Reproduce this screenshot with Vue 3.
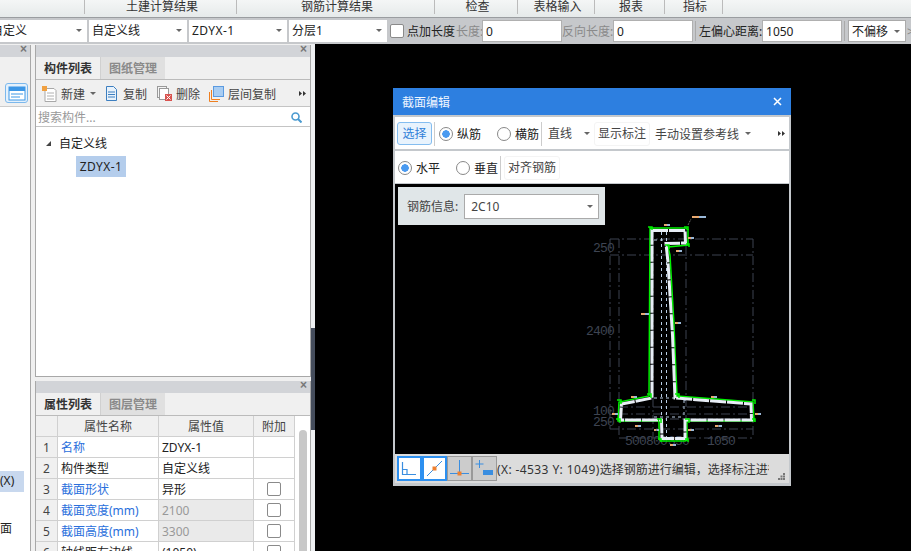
<script setup>
const menus = [
  { label: '', width: 85 },
  { label: '土建计算结果', width: 152 },
  { label: '钢筋计算结果', width: 198 },
  { label: '检查', width: 83 },
  { label: '表格输入', width: 77 },
  { label: '报表', width: 70 },
  { label: '指标', width: 58 },
]

const rows = [
  { no: 1, name: '名称', blue: true, value: 'ZDYX-1', check: false },
  { no: 2, name: '构件类型', blue: false, value: '自定义线', check: false },
  { no: 3, name: '截面形状', blue: true, value: '异形', check: true },
  { no: 4, name: '截面宽度(mm)', blue: true, value: '2100', check: true, off: true },
  { no: 5, name: '截面高度(mm)', blue: true, value: '3300', check: true, off: true },
  { no: 6, name: '轴线距左边线', blue: false, value: '(1050)', check: true },
]

const outline = '650,228 686,228 688,230 688,245 668,247 670,255 672,290 674,325 675,350 677,396 753,402 754,421 687,421 687,440 685,441 661,441 659,439 659,421 618,421 619,402 649,396'
const inner = '652,230.500 685,230.500 685.500,243 666,243.500 668,262 670,295 672.500,335 675,398 751,404 751.500,420 685,420 685,438.500 662,438.500 661.500,420 620.500,420 621.500,404 652,398'

const hDims = [
  [610, 753, 239], [610, 753, 255], [619, 753, 407], [619, 753, 414],
  [619, 753, 419], [610, 753, 429], [619, 753, 438],
]
const vDims = [
  [610, 239, 429], [619, 239, 438], [653, 228, 438], [686, 228, 438], [753, 239, 438],
]
const ticks = [
  [664, 224, 6], [688, 237, 6], [676, 250, 6], [641, 313, 8], [675, 322, 6],
  [631, 396, 6], [711, 396, 6], [612, 413, 6], [755, 413, 6], [635, 425, 6],
  [715, 425, 7], [654, 429, 5], [688, 429, 6], [670, 444, 6], [692, 216, 14],
]
</script>

<template>
  <div class="app">
    <div class="menu">
      <div v-for="m in menus" :key="m.label" class="menu-item" :style="{ width: m.width + 'px' }">{{ m.label }}</div>
    </div>

    <div class="toolbar">
      <div class="combo first">自定义<i class="caret"></i></div>
      <div class="combo">自定义线<i class="caret"></i></div>
      <div class="combo latin">ZDYX-1<i class="caret"></i></div>
      <div class="combo">分层1<i class="caret"></i></div>
      <span class="check tb-check"></span>
      <span class="tb-label">点加长度</span>
      <span class="tb-label muted len">长度:</span>
      <div class="field">0</div>
      <span class="tb-label muted rev">反向长度:</span>
      <div class="field">0</div>
      <span class="tb-sep"></span>
      <span class="tb-label offset">左偏心距离:</span>
      <div class="field">1050</div>
      <span class="tb-sep"></span>
      <div class="combo small">不偏移<i class="caret"></i></div>
      <span class="tb-more">&gt;</span>
    </div>

    <div class="main">
      <div class="side">
        <div class="panel-head"><span class="close">×</span></div>
        <div class="side-tools">
          <span class="side-icon">
            <svg width="18" height="15" viewBox="0 0 18 15">
              <rect x="1" y="1" width="16" height="13" fill="#fff" stroke="#3d97e6" />
              <rect x="1" y="1" width="16" height="4" fill="#3d97e6" />
              <path d="M3 8h12M3 11h9" stroke="#3d97e6" />
            </svg>
          </span>
        </div>
        <div class="side-body">
          <div class="side-sel">(X)</div>
          <div class="side-text">面</div>
        </div>
      </div>

      <div class="mid">
        <section class="panel top-panel">
          <div class="panel-head"><span class="close">×</span></div>
          <div class="tabs">
            <span class="tab active">构件列表</span>
            <span class="tab">图纸管理</span>
          </div>
          <div class="panel-tools">
            <svg class="t-icon new-icon" width="16" height="16" viewBox="0 0 16 16">
              <path d="M3 2.500h9l2 2v11H3z" fill="#fff" stroke="#a8a8a8" />
              <path d="M5 7h7M5 10h7M5 13h7" stroke="#b0b0b0" />
              <rect x="0" y="0" width="5" height="5" fill="#f0a040" />
            </svg>
            <span>新建</span>
            <i class="caret new-caret"></i>
            <svg class="t-icon copy-icon" width="13" height="15" viewBox="0 0 13 15">
              <path d="M1.500 .5h7l3 3v11h-10z" fill="#e8f2fb" stroke="#3d7fc0" />
              <path d="M3 6h7M3 8.500h7M3 11h7" stroke="#3d7fc0" />
            </svg>
            <span>复制</span>
            <svg class="t-icon del-icon" width="15" height="15" viewBox="0 0 15 15">
              <rect x=".5" y=".5" width="9" height="11" fill="#f4f4f4" stroke="#999" />
              <rect x="2.500" y="2.500" width="9" height="11" fill="#fff" stroke="#999" />
              <rect x="8" y="8" width="7" height="7" fill="#d9534f" />
              <path d="M9.500 9.500l4 4m0-4l-4 4" stroke="#fff" />
            </svg>
            <span>删除</span>
            <svg class="t-icon floor-icon" width="15" height="16" viewBox="0 0 15 16">
              <path d="M.5 6v9.500H9M2.500 4v9.500H11" fill="none" stroke="#ee7f20" />
              <rect x="4.500" y=".5" width="10" height="10" fill="#a9cdf2" stroke="#5a9ae0" />
            </svg>
            <span>层间复制</span>
            <svg class="more" width="7" height="5" viewBox="0 0 7 5" fill="#333"><path d="M0 0l3 2.500L0 5zM4 0l3 2.500L4 5z" /></svg>
          </div>
          <div class="search">
            <span>搜索构件...</span>
            <svg width="11" height="11" viewBox="0 0 11 11">
              <circle cx="4.500" cy="4.500" r="3.500" fill="none" stroke="#4a9ad0" stroke-width="1.600" />
              <path d="M7 7l3.500 3.500" stroke="#4a9ad0" stroke-width="2" />
            </svg>
          </div>
          <div class="tree">
            <div class="tree-root"><i class="tree-arrow"></i>自定义线</div>
            <div class="tree-node latin">ZDYX-1</div>
          </div>
        </section>

        <section class="panel bottom-panel">
          <div class="panel-head"><span class="close">×</span></div>
          <div class="tabs">
            <span class="tab active">属性列表</span>
            <span class="tab">图层管理</span>
          </div>
          <div class="grid-wrap">
            <div class="grid">
              <div class="cell no head"></div>
              <div class="cell name head">属性名称</div>
              <div class="cell value head">属性值</div>
              <div class="cell add head">附加</div>
              <template v-for="r in rows" :key="r.no">
                <div class="cell no head">{{ r.no }}</div>
                <div class="cell name left" :class="{ blue: r.blue }">{{ r.name }}</div>
                <div class="cell value left" :class="{ off: r.off }">{{ r.value }}</div>
                <div class="cell add"><span v-if="r.check" class="check"></span></div>
              </template>
            </div>
            <div class="scroll"><span class="thumb"></span></div>
          </div>
        </section>
      </div>

      <div class="splitter"><span class="grip"></span></div>

      <div class="canvas">
        <div class="dialog">
          <div class="dialog-title">
            <span>截面编辑</span>
            <svg width="9" height="9" viewBox="0 0 9 9"><path d="M1 1l7 7m0-7l-7 7" stroke="#fff" stroke-width="1.500" /></svg>
          </div>

          <div class="d-row">
            <span class="btn-select">选择</span>
            <span class="d-sep"></span>
            <span class="radio on r1"></span><span class="r-label">纵筋</span>
            <span class="radio r2"></span><span class="r-label">横筋</span>
            <span class="d-sep s2"></span>
            <span class="d-combo">直线</span><i class="caret c1"></i>
            <span class="d-btn b1">显示标注</span>
            <span class="d-text">手动设置参考线</span><i class="caret c2"></i>
            <svg class="more d-more" width="7" height="5" viewBox="0 0 7 5" fill="#333"><path d="M0 0l3 2.500L0 5zM4 0l3 2.500L4 5z" /></svg>
          </div>

          <div class="d-row second">
            <span class="radio on"></span><span class="r-label">水平</span>
            <span class="radio r3"></span><span class="r-label">垂直</span>
            <span class="d-sep s3"></span>
            <span class="d-btn">对齐钢筋</span>
          </div>

          <div class="draw">
            <div class="rebar-info">
              <span>钢筋信息:</span>
              <div class="rebar-select">2C10<i class="caret"></i></div>
            </div>
            <svg class="section" width="394" height="270" viewBox="395 184 394 270">
              <g stroke="#3c4250" stroke-dasharray="9 3 2 3" fill="none">
                <line v-for="(d, i) in hDims" :key="'h' + i" :x1="d[0]" :x2="d[1]" :y1="d[2]" :y2="d[2]" />
                <line v-for="(d, i) in vDims" :key="'v' + i" :x1="d[0]" :x2="d[0]" :y1="d[1]" :y2="d[2]" />
              </g>
              <g class="dim-text">
                <text x="593" y="252">250</text>
                <text x="586" y="335">2400</text>
                <text x="593" y="415">100</text>
                <text x="593" y="426">250</text>
                <text x="625" y="445">500</text>
                <text x="646" y="445">800</text>
                <text x="668" y="445">350</text>
                <text x="707" y="445">1050</text>
              </g>
              <g stroke="#b8cce4" stroke-dasharray="3 3" fill="none">
                <path d="M661.500 232V438M666.500 232V438M654 398H676M684 400H686M654 240h10M654 417h30M684 400v18" />
              </g>
              <polygon :points="outline" fill="none" stroke="#00f000" stroke-width="1.500" />
              <polygon :points="inner" fill="none" stroke="#e8eef6" stroke-width="3" stroke-dasharray="16 1" />
              <g fill="none" stroke="#00f000" stroke-width="1.500">
                <path d="M648 227h4v3M684 227h4v3M686 244h3v3M665 245h4v4M647 394h4v4M675 394h4v4M617 400h4v4M752 400h3v4M616 419h4v4M657 419h4v4M685 419h4v4M685 439h3v3M658 439h3v3M752 419h3v3" />
              </g>
              <path d="M688 225l3-6" stroke="#666" stroke-dasharray="2 1" />
              <g>
                <g v-for="(t, i) in ticks" :key="'t' + i">
                  <rect :x="t[0]" :y="t[1]" :width="t[2] / 2" height="2" fill="#e8a870" />
                  <rect :x="t[0] + t[2] / 2" :y="t[1]" :width="t[2] / 2" height="2" fill="#9ab8d8" />
                </g>
              </g>
            </svg>
          </div>

          <div class="status">
            <span class="s-btn on">
              <svg width="21" height="21" viewBox="0 0 21 21"><path d="M3.500 4v12.500H17M3.500 11.500H8v5" fill="none" stroke="#3a8ee0" stroke-width="1.200" /></svg>
            </span>
            <span class="s-btn on">
              <svg width="21" height="21" viewBox="0 0 21 21"><path d="M3 18L18 3" stroke="#3a8ee0" /><rect x="8.500" y="8.500" width="4" height="4" fill="#ee8030" /></svg>
            </span>
            <span class="s-btn">
              <svg width="23" height="23" viewBox="0 0 23 23"><path d="M11.500 3v15M2 16.500h19" stroke="#3a8ee0" /><rect x="9.500" y="14.500" width="4" height="4" fill="#ee8030" /></svg>
            </span>
            <span class="s-btn">
              <svg width="23" height="23" viewBox="0 0 23 23"><path d="M6.500 3v8M2.500 7h8" stroke="#3a8ee0" /><rect x="10" y="13" width="10" height="5" fill="#3a8ee0" /></svg>
            </span>
            <span class="status-text"><span class="latin">(X: -4533 Y: 1049)</span>选择钢筋进行编辑，选择标注进行</span>
            <svg class="resize" width="7" height="7" viewBox="0 0 7 7" fill="#777">
              <rect x="5" y="0" width="2" height="2" /><rect x="2.500" y="2.500" width="2" height="2" /><rect x="5" y="2.500" width="2" height="2" />
              <rect x="0" y="5" width="2" height="2" /><rect x="2.500" y="5" width="2" height="2" /><rect x="5" y="5" width="2" height="2" />
            </svg>
          </div>
        </div>
      </div>
    </div>
  </div>
</template>

<style>
html, body { margin: 0; overflow: hidden; }
</style>

<style scoped>
.app {
  width: 911px;
  height: 551px;
  overflow: hidden;
  display: flex;
  flex-direction: column;
  background: #f0f0f0;
  color: #222;
  font-family: "Noto Sans", "Noto Sans CJK SC", sans-serif;
  font-size: 12px;
}
.latin { letter-spacing: .4px; }
.menu {
  height: 17px;
  flex: 0 0 17px;
  display: flex;
  background: linear-gradient(#f4f6f6, #e6eaea);
  border-bottom: 1px solid #9a9da0;
  overflow: hidden;
}
.menu-item {
  box-sizing: border-box;
  height: 14px;
  line-height: 14px;
  text-align: center;
  padding-left: 3px;
  border-right: 1px solid #bbb;
  font-size: 12px;
  color: #333;
}
.toolbar {
  height: 26px;
  flex: 0 0 26px;
  box-sizing: border-box;
  display: flex;
  align-items: center;
  gap: 2px;
  background: #c6c8cb;
  overflow: hidden;
}
.combo {
  box-sizing: border-box;
  position: relative;
  flex: 0 0 98px;
  height: 22px;
  line-height: 21px;
  padding-left: 3px;
  background: #fff;
  white-space: nowrap;
}
.combo.first {
  flex-basis: 87px;
  text-indent: -12px;
  overflow: hidden;
}
.combo.small {
  flex-basis: 58px;
  border: 1px solid #aaa;
}
.caret {
  position: absolute;
  right: 5px;
  top: 9px;
  width: 0;
  height: 0;
  border-left: 3px solid transparent;
  border-right: 3px solid transparent;
  border-top: 3px solid #666;
}
.check {
  display: block;
  flex: none;
  box-sizing: border-box;
  width: 14px;
  height: 14px;
  background: #fff;
  border: 1px solid #8a8a8a;
  border-radius: 2px;
}
.tb-check { margin-left: 1px; }
.tb-label { flex: none; margin-left: 1px; white-space: nowrap; }
.tb-label.muted { color: #8a8a8a; }
.tb-label.len { margin-left: -1px; width: 26px; }
.tb-label.rev { margin-left: -2px; width: 51px; }
.tb-label.offset { margin-left: 0; width: 63px; }
.field {
  box-sizing: border-box;
  flex: 0 0 80px;
  height: 22px;
  line-height: 21px;
  padding-left: 3px;
  background: #fff;
  border: 1px solid #b0b0b0;
  margin-left: -2px;
}
.tb-sep {
  flex: none;
  width: 1px;
  height: 20px;
  margin-right: 1px;
  background: #aaa;
}
.tb-more { color: #888; margin-left: -1px; }

.main {
  flex: 1;
  display: flex;
  min-height: 0;
}
.side {
  flex: 0 0 31px;
  display: flex;
  flex-direction: column;
  margin-top: 1px;
  border-right: 1px solid #a8a8a8;
  box-sizing: border-box;
  background: #fff;
}
.panel-head {
  flex: 0 0 12px;
  height: 12px;
  position: relative;
  background: #d2d4d8;
}
.close {
  position: absolute;
  right: 3px;
  top: -3px;
  font-size: 12px;
  line-height: 15px;
  color: #777;
  font-family: "Liberation Sans", sans-serif;
  font-weight: bold;
}
.side-tools {
  box-sizing: border-box;
  height: 50px;
  padding: 26px 0 0 5px;
  background: #f0f0f0;
  border-bottom: 1px solid #ccc;
}
.side-icon {
  display: flex;
  align-items: center;
  justify-content: center;
  width: 23px;
  height: 20px;
  background: #e4f1fc;
  border: 1px solid #7cb8ec;
  border-radius: 3px;
  box-sizing: border-box;
}
.side-body {
  flex: 1;
  padding-top: 364px;
}
.side-sel {
  width: 24px;
  height: 21px;
  line-height: 20px;
  background: #c8d8ee;
}
.side-text {
  margin-top: 27px;
  line-height: 20px;
}

.mid {
  flex: 0 0 276px;
  margin-left: 4px;
  display: flex;
  flex-direction: column;
  gap: 4px;
  padding-top: 1px;
}
.panel {
  box-sizing: border-box;
  display: flex;
  flex-direction: column;
  border-left: 1px solid #a8a8a8;
  border-right: 1px solid #a8a8a8;
  background: #f0f0f0;
}
.top-panel {
  flex: 0 0 332px;
  border-bottom: 1px solid #a8a8a8;
}
.bottom-panel {
  flex: 1;
  min-height: 0;
  overflow: hidden;
}
.tabs {
  flex: 0 0 23px;
  min-height: 0;
  box-sizing: border-box;
  display: flex;
  align-items: flex-start;
  border-bottom: 1px solid #bbb;
}
.tab {
  width: 64px;
  height: 22px;
  text-align: center;
  line-height: 23px;
  background: #e0e0e0;
  color: #8a8a8a;
  font-weight: bold;
  border-left: 1px solid #d0d0d0;
}
.tab.active {
  background: #f0f0f0;
  color: #333;
  border-left: 0;
}
.panel-tools {
  flex: 0 0 27px;
  box-sizing: border-box;
  display: flex;
  align-items: center;
  padding: 1px 0 0 6px;
  border-bottom: 1px solid #c4c4c4;
  position: relative;
  color: #444;
}
.t-icon { margin-right: 5px; }
.new-icon { margin-right: 3px; }
.new-caret {
  position: static;
  margin: 0 9px 0 5px;
}
.del-icon { margin-left: 10px; margin-right: 4px; }
.floor-icon { margin-left: 9px; margin-right: 4px; }
.more {
  position: absolute;
  right: 4px;
}
.search {
  flex: 0 0 19px;
  box-sizing: border-box;
  display: flex;
  align-items: center;
  justify-content: space-between;
  padding: 1px 8px 0 2px;
  background: #fff;
  color: #999;
  border-bottom: 1px solid #c4c4c4;
}
.tree {
  flex: 1;
  background: #fff;
  padding-top: 6px;
}
.tree-root {
  display: flex;
  align-items: center;
  height: 20px;
  padding-left: 10px;
}
.tree-arrow {
  width: 0;
  height: 0;
  margin-right: 8px;
  border-left: 5px solid transparent;
  border-bottom: 5px solid #444;
}
.tree-node {
  width: 50px;
  height: 21px;
  line-height: 21px;
  margin: 3px 0 0 40px;
  text-align: center;
  background: #b4cdec;
}

.grid-wrap {
  flex: 1;
  display: flex;
  min-height: 0;
  background: #fff;
}
.grid {
  flex: 0 0 259px;
  display: grid;
  grid-template-columns: 22px 101px 95px 41px;
  grid-auto-rows: 21px;
  align-content: start;
}
.cell {
  box-sizing: border-box;
  display: flex;
  align-items: center;
  justify-content: center;
  border-right: 1px solid #d0d0d0;
  border-bottom: 1px solid #d0d0d0;
  white-space: nowrap;
  overflow: hidden;
  background: #fff;
}
.cell.head {
  background: #f0f0f0;
  color: #444;
}
.cell.left {
  justify-content: flex-start;
  padding-left: 3px;
}
.cell.blue { color: #2a6fdc; }
.cell.off {
  background: #eaeaea;
  color: #999;
}
.scroll {
  flex: 1;
  padding: 14px 3px 0 4px;
}
.thumb {
  display: block;
  width: 8px;
  height: 140px;
  border-radius: 4px 4px 0 0;
  background: #c8c8c8;
}

.splitter {
  flex: 0 0 4px;
  position: relative;
  background: #eef0f2;
}
.grip {
  position: absolute;
  left: 0;
  top: 284px;
  width: 4px;
  height: 102px;
  background: #454d5c;
}

.canvas {
  flex: 1;
  position: relative;
  background: #000;
}
.dialog {
  position: absolute;
  left: 78px;
  top: 44px;
  width: 398px;
  height: 398px;
  box-sizing: border-box;
  display: flex;
  flex-direction: column;
  background: #c4c8cc;
}
.dialog-title {
  flex: 0 0 27px;
  display: flex;
  align-items: center;
  justify-content: space-between;
  padding: 0 9px;
  background: #2d7fe0;
  color: #f0f6ff;
}
.d-row {
  flex: 0 0 32px;
  box-sizing: border-box;
  position: relative;
  display: flex;
  align-items: center;
  margin: 2px 2px 0;
  padding: 1px 0 0 2px;
  background: #fff;
}
.d-row.second {
  padding-left: 3px;
}
.btn-select {
  box-sizing: border-box;
  width: 35px;
  height: 23px;
  line-height: 21px;
  text-align: center;
  color: #2f80d8;
  background: #e8f3fd;
  border: 1px solid #84bdf0;
  border-radius: 3px;
}
.d-sep {
  width: 1px;
  height: 24px;
  margin: 0 4px 0 2px;
  background: #ccc;
}
.d-sep.s2 { margin: 0 3px 0 2px; }
.d-sep.s3 { margin: 0 3px 0 2px; }
.radio {
  box-sizing: border-box;
  width: 14px;
  height: 14px;
  margin-right: 4px;
  background: #fff;
  border: 1px solid #888;
  border-radius: 50%;
}
.radio.on {
  background: radial-gradient(circle, #4a9af0 0 3.500px, #fff 4px);
}
.r2 { margin-left: 16px; }
.r3 { margin-left: 16px; }
.d-combo {
  width: 37px;
  padding-left: 3px;
  box-sizing: border-box;
  line-height: 22px;
  color: #444;
}
.c1 { left: 189px; right: auto; top: 15px; }
.c2 { left: 350px; right: auto; top: 15px; }
.d-btn {
  padding: 0 3px;
  line-height: 22px;
  color: #444;
  border-radius: 3px;
  border: 1px solid #f4f4f4;
}
.b1 { margin-left: 12px; }
.d-text { margin-left: 5px; color: #444; white-space: nowrap; }
.d-more { right: 4px; }
.draw {
  flex: 1;
  position: relative;
  margin: 1px 2px 0;
  background: #000;
  min-height: 0;
}
.section {
  display: block;
}
.dim-text text {
  fill: #3e4452;
  font-family: "Liberation Mono", monospace;
  font-size: 13px;
  letter-spacing: -.8px;
}
.rebar-info {
  position: absolute;
  left: 3px;
  top: 3px;
  box-sizing: border-box;
  width: 207px;
  height: 38px;
  display: flex;
  align-items: center;
  gap: 6px;
  padding-left: 9px;
  background: #e0e6e8;
  color: #444;
}
.rebar-select {
  position: relative;
  box-sizing: border-box;
  width: 135px;
  height: 25px;
  line-height: 23px;
  padding-left: 6px;
  background: #fff;
  border: 1px solid #aaa;
}
.rebar-select .caret { top: 10px; }
.status {
  flex: 0 0 29px;
  box-sizing: border-box;
  display: flex;
  align-items: center;
  position: relative;
  margin: 0 2px 3px;
  padding-left: 2px;
  background: #dcdcdc;
  overflow: hidden;
}
.s-btn {
  box-sizing: border-box;
  flex: 0 0 25px;
  height: 25px;
  display: flex;
  align-items: center;
  justify-content: center;
  background: #ccc;
  border: 1px solid #999;
}
.s-btn.on {
  background: #fff;
  border: 2px solid #2d90f0;
}
.status-text {
  width: 272px;
  overflow: hidden;
  white-space: nowrap;
  color: #333;
}
.resize {
  position: absolute;
  right: 4px;
  bottom: 3px;
}
</style>
